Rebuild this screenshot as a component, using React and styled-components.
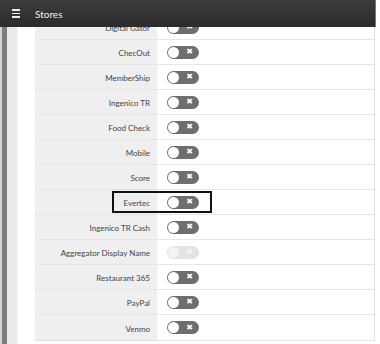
import React from 'react'
import styled, { createGlobalStyle } from 'styled-components'

const stores = [
    { name: 'Digital Gator' },
    { name: 'ChecOut' },
    { name: 'MemberShip' },
    { name: 'Ingenico TR' },
    { name: 'Food Check' },
    { name: 'Mobile' },
    { name: 'Score' },
    { name: 'Evertec', marked: true },
    { name: 'Ingenico TR Cash' },
    { name: 'Aggregator Display Name', disabled: true },
    { name: 'Restaurant 365' },
    { name: 'PayPal' },
    { name: 'Venmo' },
]

function App() {
    return (
        <>
            <GlobalStyle />
            <Page>
                <Header>
                    <Burger>
                        <span /><span /><span />
                    </Burger>
                    <Title>Stores</Title>
                </Header>

                <SideStrip />

                <Content>
                    <Table>
                        {stores.map((store) => (
                            <Row key={store.name}>
                                <Label>{store.name}</Label>
                                <Value>
                                    <Toggle disabled={store.disabled}>
                                        <Knob disabled={store.disabled} />
                                        <Cross disabled={store.disabled}>✖</Cross>
                                    </Toggle>
                                </Value>
                                {store.marked && <Highlight />}
                            </Row>
                        ))}
                    </Table>
                </Content>
            </Page>
        </>
    )
}

export default App

const GlobalStyle = createGlobalStyle`
    html, body {
        margin: 0;
        padding: 0;
        background: #fff;
        font-family: Lato, "Open Sans", sans-serif;
    }
`

const Page = styled.div`
    position: relative;
    width: 380px;
    height: 344px;
    overflow: hidden;
    display: flex;
    background: #fff;
`

const Header = styled.div`
    position: absolute;
    top: 0;
    left: 0;
    width: 375px;
    height: 27px;
    background: linear-gradient(#3c3c3c, #2b2b2b);
    border-right: 1px solid #777;
    display: flex;
    align-items: center;
    z-index: 2;
`

const Burger = styled.div`
    width: 8px;
    margin-left: 12px;
    display: flex;
    flex-direction: column;
    gap: 2px;
    span {
        display: block;
        height: 1.5px;
        background: #eee;
    }
`

const Title = styled.div`
    margin-left: 15px;
    color: #f0f0f0;
    font-size: 10px;
`

const SideStrip = styled.div`
    flex: 0 0 18px;
    background: linear-gradient(to right,
        #d4d4d4 0 2px,
        #7c7c7c 2px 7px,
        #ebebeb 7px 17px,
        #f6f6f6 17px 18px);
`

const Content = styled.div`
    flex: 1;
    padding: 15px 0 0 17px;
`

const Table = styled.div`
    width: 339px;
    border-right: 1px solid #e2e2e2;
    border-bottom: 1px solid #e2e2e2;
`

const Row = styled.div`
    position: relative;
    display: grid;
    grid-template-columns: 122px 1fr;
    height: 25px;
    box-sizing: border-box;
    border-bottom: 1px solid #e6e6e6;
    &:last-child {
        border-bottom: none;
    }
`

const Label = styled.div`
    background: #efefef;
    color: #444;
    font-size: 8px;
    display: flex;
    align-items: center;
    justify-content: flex-end;
    padding-right: 7px;
    padding-top: 2px;
`

const Value = styled.div`
    display: flex;
    align-items: center;
    padding-left: 10px;
`

const Toggle = styled.div`
    width: 32px;
    height: 13px;
    border-radius: 7px;
    background: ${props => props.disabled ? '#e3e3e3' : '#6e6e6e'};
    display: flex;
    align-items: center;
    justify-content: space-between;
    padding: 0 6px 0 1px;
    box-sizing: border-box;
`

const Knob = styled.div`
    width: 11px;
    height: 11px;
    border-radius: 50%;
    background: ${props => props.disabled ? '#f3f3f3' : '#fff'};
`

const Cross = styled.span`
    color: ${props => props.disabled ? '#f5f5f5' : '#fff'};
    font-family: "DejaVu Sans", sans-serif;
    font-size: 8px;
    line-height: 1;
`

const Highlight = styled.div`
    position: absolute;
    left: 77px;
    top: 1px;
    width: 100px;
    height: 22px;
    border: 2px solid #111;
    box-sizing: border-box;
`
